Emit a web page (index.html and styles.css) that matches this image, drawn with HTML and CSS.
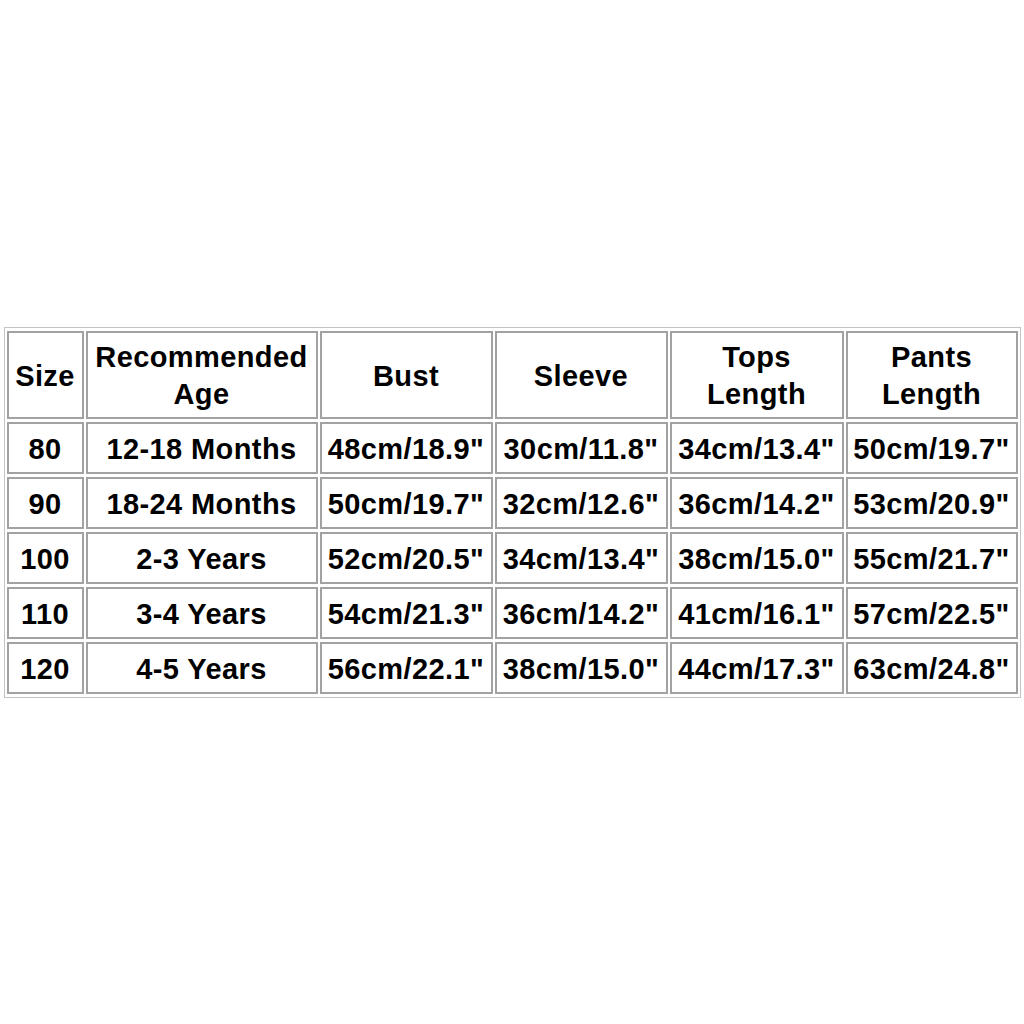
FILE: index.html
```html
<!DOCTYPE html>
<html>
<head>
<meta charset="utf-8">
<link rel="stylesheet" href="styles.css">
</head>
<body>
<div class="page">
<table class="size-table">
  <colgroup>
    <col class="c-size"><col class="c-age"><col class="c-bust"><col class="c-sleeve"><col class="c-tops"><col class="c-pants">
  </colgroup>
  <tr class="head">
    <td>Size</td>
    <td>Recommended<br>Age</td>
    <td>Bust</td>
    <td>Sleeve</td>
    <td>Tops<br>Length</td>
    <td>Pants<br>Length</td>
  </tr>
  <tr>
    <td>80</td><td>12-18 Months</td><td>48cm/18.9"</td><td>30cm/11.8"</td><td>34cm/13.4"</td><td>50cm/19.7"</td>
  </tr>
  <tr>
    <td>90</td><td>18-24 Months</td><td>50cm/19.7"</td><td>32cm/12.6"</td><td>36cm/14.2"</td><td>53cm/20.9"</td>
  </tr>
  <tr>
    <td>100</td><td>2-3 Years</td><td>52cm/20.5"</td><td>34cm/13.4"</td><td>38cm/15.0"</td><td>55cm/21.7"</td>
  </tr>
  <tr>
    <td>110</td><td>3-4 Years</td><td>54cm/21.3"</td><td>36cm/14.2"</td><td>41cm/16.1"</td><td>57cm/22.5"</td>
  </tr>
  <tr>
    <td>120</td><td>4-5 Years</td><td>56cm/22.1"</td><td>38cm/15.0"</td><td>44cm/17.3"</td><td>63cm/24.8"</td>
  </tr>
</table>
</div>
</body>
</html>
```
FILE: styles.css
```css
html, body {
  margin: 0;
  padding: 0;
  background: #ffffff;
}
.page {
  width: 1024px;
  height: 1024px;
  display: flex;
  align-items: center;
  justify-content: center;
}
.size-table {
  table-layout: fixed;
  width: 1017px;
  border-collapse: separate;
  border-spacing: 2px 3px;
  border: 1px solid #c4c4c4;
  font-family: "Liberation Sans", Arial, sans-serif;
  font-weight: bold;
  font-size: 29px;
  color: #000;
}
.c-size { width: 77px; }
.c-age { width: 232px; }
.c-bust { width: 173px; }
.c-sleeve { width: 173px; }
.c-tops { width: 174px; }
.c-pants { width: 172px; }
.size-table td {
  box-sizing: border-box;
  border: 2px solid #a2a2a2;
  height: 52px;
  padding: 3px 0 0 0;
  text-align: center;
  vertical-align: middle;
  line-height: 37px;
  white-space: nowrap;
  letter-spacing: 0.4px;
}
.size-table tr.head td {
  height: 88px;
}
```
